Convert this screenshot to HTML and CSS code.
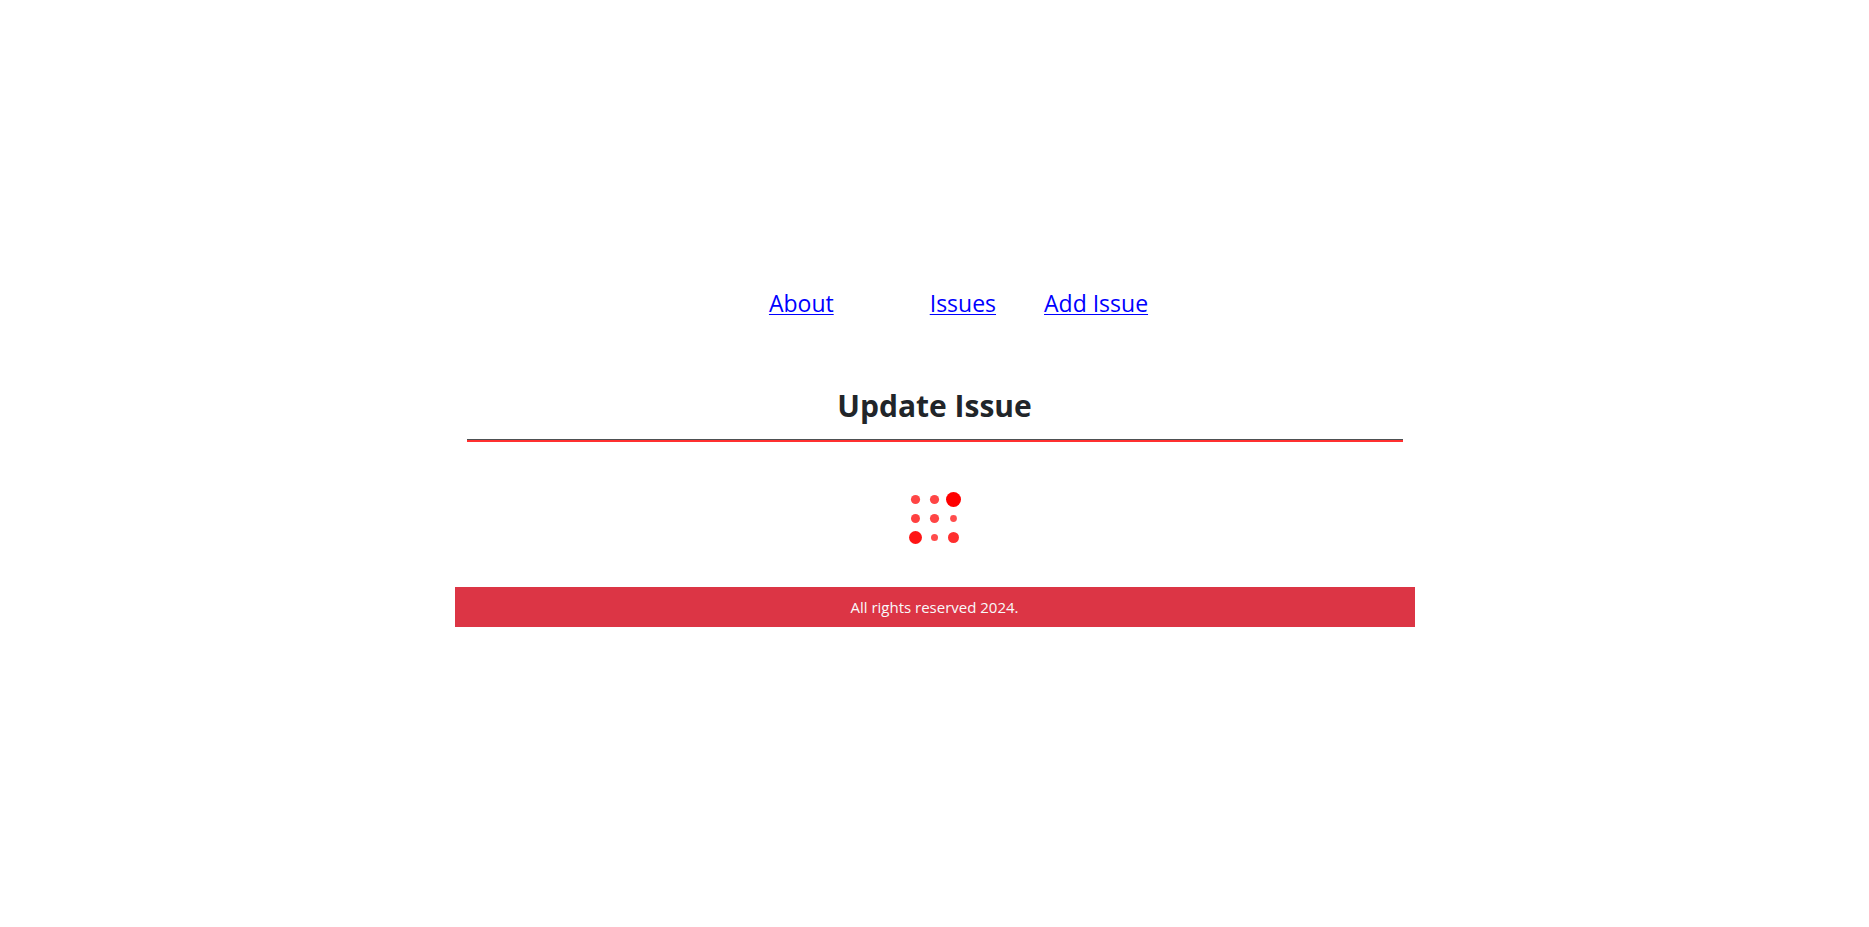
FILE: index.html
```html
<!DOCTYPE html>
<html lang="en">
<head>
<meta charset="utf-8">
<title>Update Issue</title>
<link rel="stylesheet" href="styles.css">
</head>
<body>
<div class="container">
  <nav>
    <ul class="menu">
      <li class="menu-home"><a href="#about">About</a></li>
      <li><a href="#issues">Issues</a></li>
      <li><a href="#add">Add Issue</a></li>
    </ul>
  </nav>
  <main class="content">
    <h1 class="title">Update Issue</h1>
    <hr class="rule">
    <svg class="loader" width="57" height="57" viewBox="0 0 57 57" role="img" aria-label="Loading" fill="#f00">
      <circle cx="9.5" cy="9.5" r="4.6" opacity=".73"/>
      <circle cx="28.5" cy="9.5" r="4.6" opacity=".73"/>
      <circle cx="47.5" cy="9.5" r="7.5"/>
      <circle cx="9.5" cy="28.5" r="4.5" opacity=".75"/>
      <circle cx="28.5" cy="28.5" r="4.6" opacity=".73"/>
      <circle cx="47.5" cy="28.5" r="3.4" opacity=".7"/>
      <circle cx="9.5" cy="47.5" r="6.5" opacity=".92"/>
      <circle cx="28.5" cy="47.5" r="3.5" opacity=".7"/>
      <circle cx="47.5" cy="47.5" r="5.5" opacity=".82"/>
    </svg>
  </main>
  <footer class="footer">All rights reserved 2024.</footer>
</div>
</body>
</html>
```
FILE: styles.css
```css
* {
  box-sizing: border-box;
}

body {
  margin: 0;
  min-height: 100vh;
  padding-bottom: 14px;
  display: flex;
  align-items: center;
  justify-content: center;
  background: #fff;
  color: #212529;
  font: 16px/24px "Segoe UI", "Open Sans", sans-serif;
}

.container {
  width: 100%;
  max-width: 960px;
}

.menu {
  display: flex;
  justify-content: center;
  margin: 0;
  padding: 0;
  list-style: none;
  font-size: 23px;
  line-height: 34px;
}

.menu li {
  padding-left: 48px;
}

.menu .menu-home {
  padding-right: 48px;
}

.menu a {
  color: #00f;
  text-decoration-thickness: 1px;
  text-underline-offset: 2px;
}

.content {
  display: flex;
  flex-direction: column;
  align-items: center;
  padding: 62px 12px 40px;
}

.title {
  margin: 0;
  font-size: 30px;
  line-height: 48px;
}

.rule {
  width: 100%;
  height: 3px;
  margin: 9px 0 48px;
  border: 0;
  border-top: 1px solid #4d5154;
  background: #ff3030;
}

.loader {
  display: block;
}

.footer {
  padding: 8px;
  background: #dc3545;
  color: #f8f9fa;
  font-size: 15px;
  text-align: center;
}
```
